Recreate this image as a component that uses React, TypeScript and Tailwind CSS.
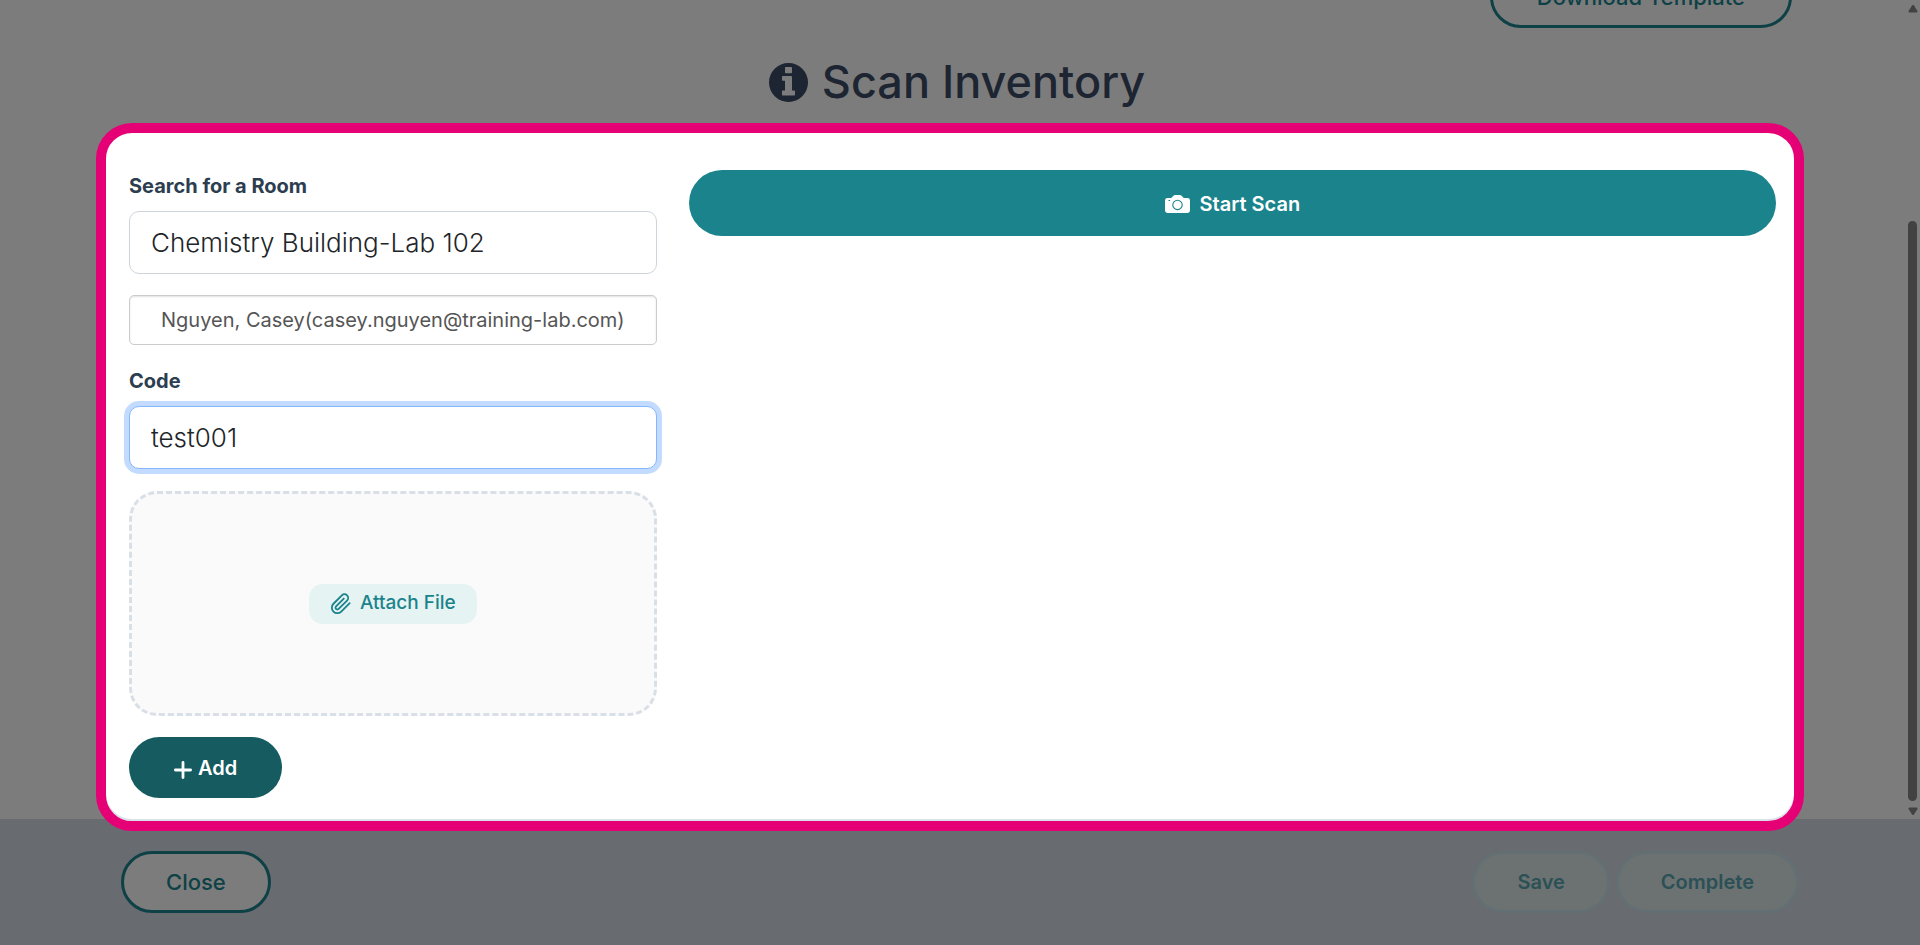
const footerActions = ['Save', 'Complete']

function InfoIcon() {
  return (
    <svg width="39" height="39" viewBox="0 0 39 39" fill="currentColor" fillRule="evenodd" aria-hidden="true">
      <path d="M19.5 0a19.5 19.5 0 1 1 0 39a19.5 19.5 0 0 1 0-39ZM16.7 4h5.6q.7 0 .7.7v4.9q0 .7-.7.7h-5.6q-.7 0-.7-.7V4.7q0-.7.7-.7ZM13.7 13h8.6q.7 0 .7.7v13.8h2.3q.7 0 .7.7v3.6q0 .7-.7.7H13.7q-.7 0-.7-.7v-3.6q0-.7.7-.7H16v-9.7h-2.3q-.7 0-.7-.7v-3.4q0-.7.7-.7Z" />
    </svg>
  )
}

function CameraIcon() {
  return (
    <svg width="25" height="18" viewBox="0 0 25 18" aria-hidden="true">
      <path
        d="M2.4 3H6.2L8.2.9Q9 0 10.2 0h4.6Q16 0 16.800.9L18.8 3h3.8Q25 3 25 5.4v10.2Q25 18 22.6 18H2.4Q0 18 0 15.6V5.4Q0 3 2.4 3Z"
        className="fill-white"
      />
      <circle cx="12.5" cy="9.9" r="4.7" className="fill-none stroke-[#1b838b]" strokeWidth="1.1" />
      <path d="M3.5 5.5h1.6" className="stroke-[#1b838b]" strokeWidth="1" />
    </svg>
  )
}

function ClipIcon() {
  return (
    <svg
      width="22"
      height="22"
      viewBox="0 0 24 24"
      className="fill-none stroke-current"
      strokeWidth="2"
      strokeLinecap="round"
      strokeLinejoin="round"
      aria-hidden="true"
    >
      <path d="M21.44 11.05l-9.19 9.19a6 6 0 0 1-8.49-8.49l9.19-9.19a4 4 0 0 1 5.66 5.66l-9.2 9.19a2 2 0 0 1-2.83-2.83l8.49-8.48" />
    </svg>
  )
}

function PlusIcon() {
  return (
    <svg width="18" height="18" viewBox="0 0 18 18" className="mt-1 stroke-white" strokeWidth="2.8" strokeLinecap="round" aria-hidden="true">
      <path d="M9 1.4v15.2M1.4 9h15.2" />
    </svg>
  )
}

function ScrollRail() {
  return (
    <div aria-hidden="true" className="flex w-[15px] shrink-0 flex-col items-center pt-[5px] pb-1">
      <svg width="10" height="8" viewBox="0 0 10 8" className="shrink-0 fill-[#424242]">
        <path d="M4 .6a1.2 1.2 0 0 1 2 0l3.3 5.2Q10 7.5 8.5 7.5h-7Q0 7.5.7 5.8Z" />
      </svg>
      <div className="flex w-full flex-1 flex-col items-center pt-52 pb-1.5">
        <div className="w-[9px] flex-1 rounded-full bg-[#424242]" />
      </div>
      <svg width="10" height="8" viewBox="0 0 10 8" className="shrink-0 rotate-180 fill-[#424242]">
        <path d="M4 .6a1.2 1.2 0 0 1 2 0l3.3 5.2Q10 7.5 8.5 7.5h-7Q0 7.5.7 5.8Z" />
      </svg>
    </div>
  )
}

function ScanForm() {
  return (
    <form className="flex flex-col items-start pt-px" onSubmit={(e) => e.preventDefault()}>
      <label htmlFor="room" className="text-xl leading-[30px] font-bold text-[#2c3e50]">
        Search for a Room
      </label>
      <input
        id="room"
        type="text"
        defaultValue="Chemistry Building-Lab 102"
        className="mt-2.5 h-[63px] w-full rounded-[10px] border border-[#ced4da] bg-white px-[21px] text-[26px] font-light text-[#212529] outline-none"
      />
      <input
        type="text"
        readOnly
        aria-label="Room owner"
        defaultValue="Nguyen, Casey(casey.nguyen@training-lab.com)"
        className="mt-[21px] h-[50px] w-full rounded-[5px] border border-[#ccc] bg-white px-3 text-center text-xl text-[#555] shadow-[inset_0_1px_2px_rgba(0,0,0,0.12)] outline-none"
      />
      <label htmlFor="code" className="mt-[21px] text-xl leading-[30px] font-bold text-[#2c3e50]">
        Code
      </label>
      <input
        id="code"
        type="text"
        defaultValue="test001"
        className="mt-2.5 h-[63px] w-full rounded-[10px] border border-[#86b7fe] bg-white px-[21px] text-[26px] font-light text-[#212529] ring-[5px] ring-[#c2dbfe] outline-none"
      />

      {/* Attachment drop area */}
      <div className="mt-[22px] flex h-[225px] w-full items-center justify-center rounded-[28px] border-[3px] border-dashed border-[#d9dfe7] bg-[#fafafa]">
        <button
          type="button"
          className="flex h-10 items-center gap-2 rounded-[14px] bg-[#e6f3f3] px-[21px] text-[19px] font-medium text-[#1b838b]"
        >
          <ClipIcon />
          Attach File
        </button>
      </div>

      <button
        type="submit"
        className="mt-[21px] flex h-[61px] items-center gap-1.5 rounded-full bg-[#155b60] px-[45px] text-xl font-semibold text-white"
      >
        <PlusIcon />
        Add
      </button>
    </form>
  )
}

export default function App() {
  return (
    <div className="flex min-h-screen flex-col overflow-hidden bg-[#7c7c7c] font-['Inter','Liberation_Sans',sans-serif]">
      <div className="flex flex-1">
        <main className="flex min-w-0 flex-1 flex-col">
          {/* Scrolled partly out of view */}
          <div className="mr-[113px] -mt-[34px] flex justify-end">
            <button
              type="button"
              className="h-[62px] rounded-full border-[3px] border-[#0e4146] px-11 text-[22px] font-medium text-[#0e4146]"
            >
              Download Template
            </button>
          </div>

          <h1 className="mt-[22px] flex items-center justify-center gap-3.5 pl-[9px] text-[45px] leading-[64px] font-medium text-[#1c2531]">
            <InfoIcon />
            Scan Inventory
          </h1>

          {/* Highlighted panel, hangs over the footer edge */}
          <section className="relative z-10 mt-[9px] mr-[101px] -mb-3 ml-24 grid flex-1 grid-cols-3 items-start gap-8 rounded-[36px] border-10 border-[#e50076] bg-white pt-[37px] pr-[18px] pb-[22px] pl-[23px] shadow-[inset_0_-2px_0_#d9e0e7]">
            <ScanForm />
            <button
              type="button"
              className="col-span-2 flex h-[66px] items-center justify-center gap-2.5 rounded-full bg-[#1b838b] pt-0.5 text-xl font-semibold text-white"
            >
              <CameraIcon />
              Start Scan
            </button>
          </section>
        </main>
        <ScrollRail />
      </div>

      <footer className="flex h-[126px] items-center justify-between bg-[#686b70] px-[121px]">
        <button
          type="button"
          className="h-[62px] rounded-full border-[3px] border-[#0e4146] bg-[#7c7c7c] px-[42px] text-[22px] font-medium text-[#0e4146]"
        >
          Close
        </button>
        <div className="flex gap-1.5">
          {footerActions.map((label) => (
            <button
              key={label}
              type="button"
              disabled
              className="h-[62px] rounded-full border-[3px] border-[#636f73] bg-[#6c7272] px-[42px] text-xl font-semibold text-[#2b5055]"
            >
              {label}
            </button>
          ))}
        </div>
      </footer>
    </div>
  )
}
